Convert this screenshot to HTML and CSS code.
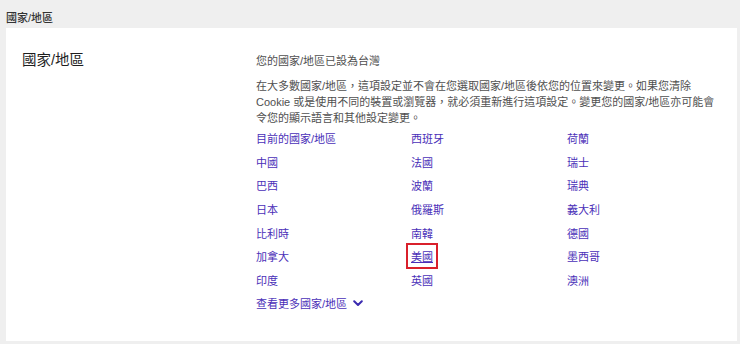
FILE: index.html
```html
<!DOCTYPE html>
<html lang="zh-Hant">
<head>
  <meta charset="UTF-8" />
  <meta name="viewport" content="width=device-width, initial-scale=1.0" />
  <title>國家/地區</title>
  <link rel="stylesheet" href="styles.css">
</head>
<body>
  <div class="section-label">國家/地區</div>
  <div class="card">
    <h2>國家/地區</h2>
    <div class="content">
      <p class="current">您的國家/地區已設為台灣</p>
      <p class="desc">在大多數國家/地區，這項設定並不會在您選取國家/地區後依您的位置來變更。如果您清除 Cookie 或是使用不同的裝置或瀏覽器，就必須重新進行這項設定。變更您的國家/地區亦可能會令您的顯示語言和其他設定變更。</p>
      <ul class="regions">
        <li><a href="#">目前的國家/地區</a></li>
        <li><a href="#">西班牙</a></li>
        <li><a href="#">荷蘭</a></li>
        <li><a href="#">中國</a></li>
        <li><a href="#">法國</a></li>
        <li><a href="#">瑞士</a></li>
        <li><a href="#">巴西</a></li>
        <li><a href="#">波蘭</a></li>
        <li><a href="#">瑞典</a></li>
        <li><a href="#">日本</a></li>
        <li><a href="#">俄羅斯</a></li>
        <li><a href="#">義大利</a></li>
        <li><a href="#">比利時</a></li>
        <li><a href="#">南韓</a></li>
        <li><a href="#">德國</a></li>
        <li><a href="#">加拿大</a></li>
        <li><a href="#" class="selected">美國</a></li>
        <li><a href="#">墨西哥</a></li>
        <li><a href="#">印度</a></li>
        <li><a href="#">英國</a></li>
        <li><a href="#">澳洲</a></li>
      </ul>
      <a href="#" class="more">查看更多國家/地區
        <svg width="10" height="7" viewBox="0 0 10 7"><path d="M1.2 1.2 5 5 8.8 1.2" fill="none" stroke="currentColor" stroke-width="2" stroke-linecap="round" stroke-linejoin="round"/></svg>
      </a>
    </div>
  </div>
</body>
</html>
```

FILE: styles.css
```css
body {
  margin: 0;
  padding: 0 3px 0 6px;
  background: #efefef;
  font-family: "Liberation Sans", "Noto Sans CJK TC", sans-serif;
  height: 344px;
  box-sizing: border-box;
  overflow: hidden;
}
.section-label {
  height: 28px;
  padding-top: 9px;
  box-sizing: border-box;
  font-size: 11px;
  font-weight: 500;
  color: #333;
}
.card {
  background: #fff;
  display: flex;
  padding: 23px 16px 0;
  height: 313px;
  box-sizing: border-box;
}
h2 {
  margin: 0;
  width: 234px;
  flex-shrink: 0;
  font-size: 14.5px;
  font-weight: normal;
  color: #1e1e1e;
  line-height: 18px;
}
.content {
  width: 460px;
  font-size: 11px;
  color: #4f4f4f;
}
.current {
  margin: 2px 0 9px;
  line-height: 16px;
}
.desc {
  margin: 0;
  line-height: 16px;
}
.regions {
  list-style: none;
  margin: 0;
  padding: 0;
  display: grid;
  grid-template-columns: 155px 156px 1fr;
}
.regions li {
  height: 23.7px;
  display: flex;
  align-items: center;
}
a {
  color: #4a2fb8;
  text-decoration: none;
}
.selected {
  text-decoration: underline;
  outline: 2px solid #d9202b;
  outline-offset: 3px;
}
.more {
  display: inline-flex;
  align-items: center;
  gap: 6px;
  margin-top: 2px;
  line-height: 20px;
}
.more svg {
  color: #3b2bb0;
}
```
